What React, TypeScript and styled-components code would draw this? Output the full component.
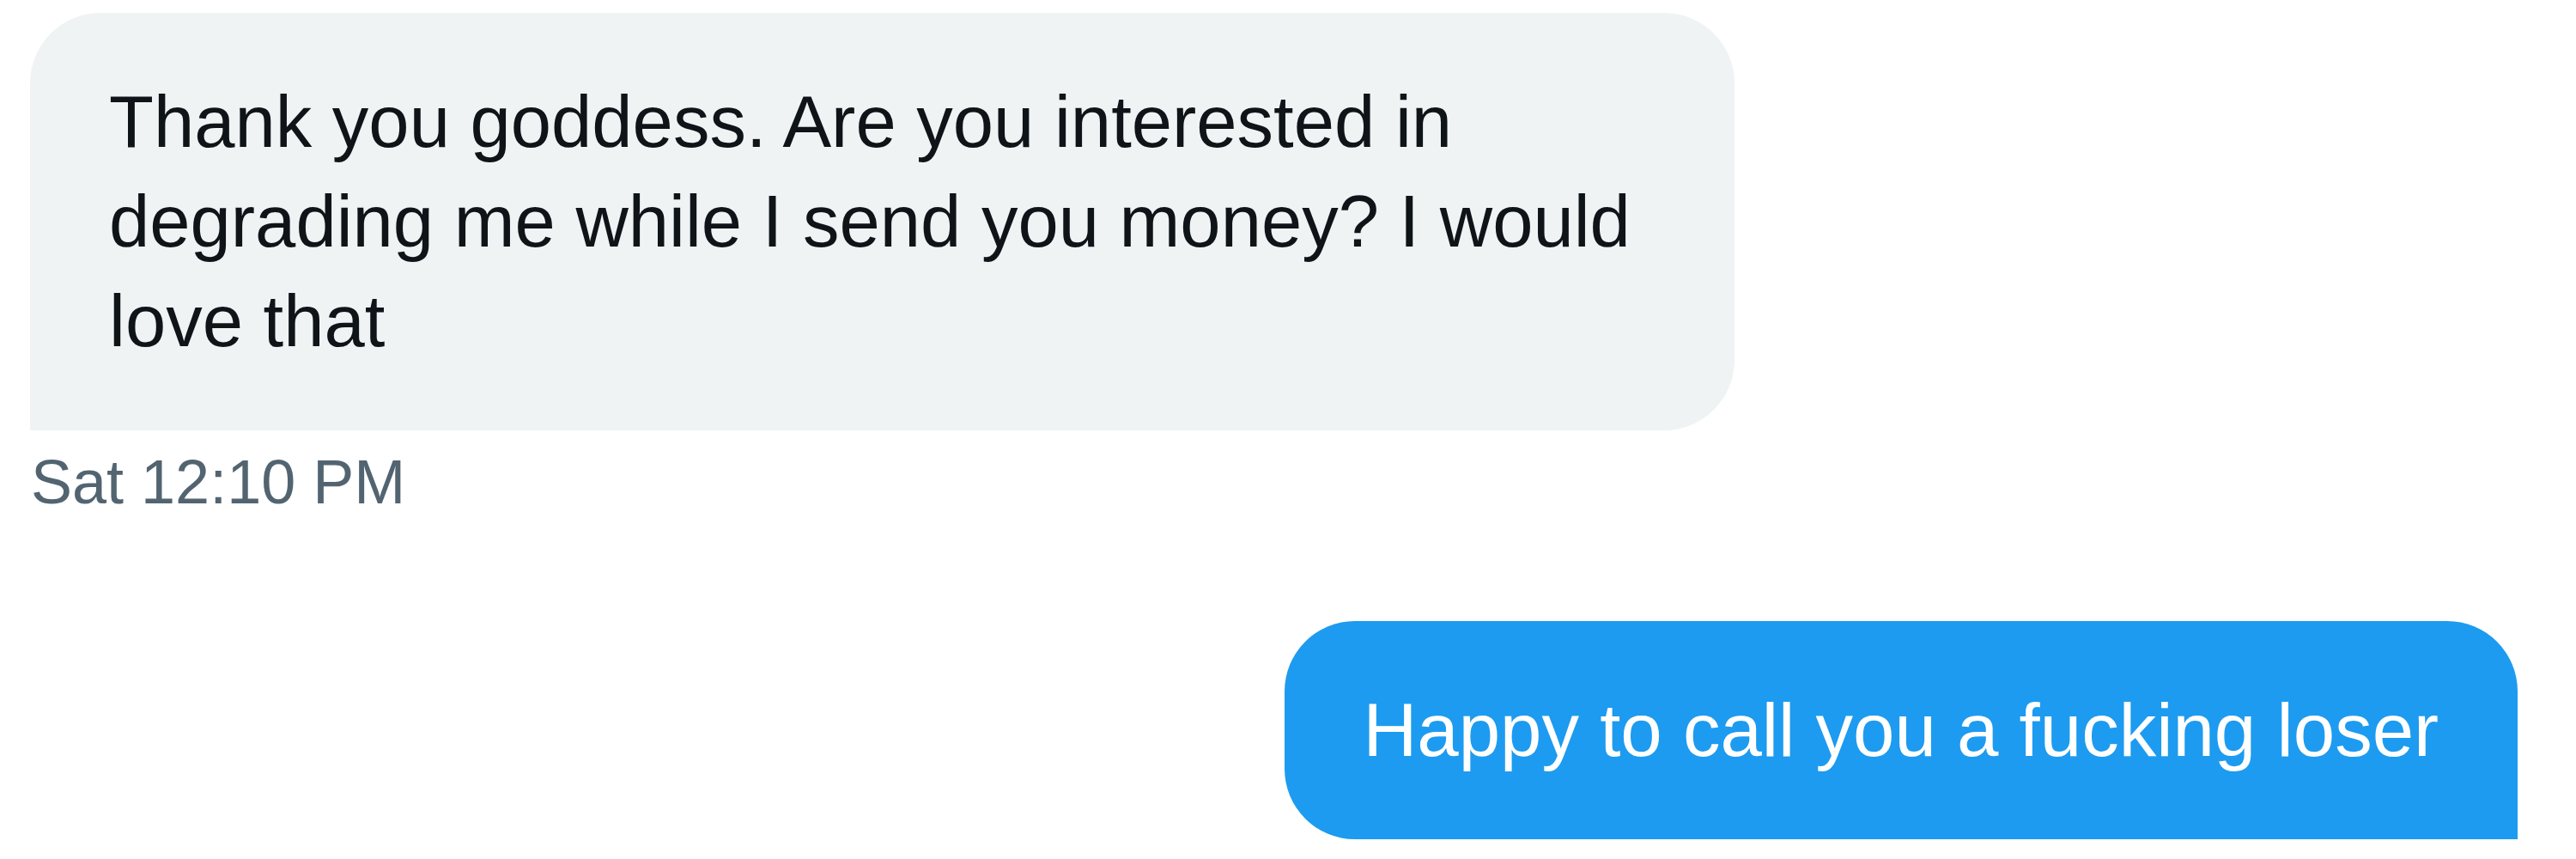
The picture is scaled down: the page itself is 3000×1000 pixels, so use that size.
import React from "react";
import styled, { createGlobalStyle } from "styled-components";

const GlobalStyle = createGlobalStyle`
  html, body {
    margin: 0;
    padding: 0;
    background: #ffffff;
  }
  body {
    font-family: "Liberation Sans", Arial, Helvetica, sans-serif;
  }
`;

const Conversation = styled.div`
  width: 3000px;
  height: 1000px;
  box-sizing: border-box;
  padding: 15px 68px 0 35px;
  display: flex;
  flex-direction: column;
  background: #ffffff;
  overflow: hidden;
`;

const MessageGroup = styled.div<{ $side: "left" | "right" }>`
  display: flex;
  flex-direction: column;
  align-items: ${(p) => (p.$side === "right" ? "flex-end" : "flex-start")};
  margin-top: ${(p) => (p.$side === "right" ? "116px" : "0")};
`;

const Bubble = styled.div<{ $variant: "received" | "sent" }>`
  box-sizing: border-box;
  line-height: 116px;
  padding: 69px 92px;
  ${(p) =>
    p.$variant === "received"
      ? `
    width: 1985px;
    font-size: 85px;
    background: #eff3f4;
    color: #0f1419;
    border-radius: 82px 82px 82px 0;
  `
      : `
    width: fit-content;
    font-size: 87px;
    padding-left: 92px;
    padding-right: 92px;
    background: #1d9bf0;
    color: #ffffff;
    border-radius: 82px 82px 0 82px;
  `}
`;

const Timestamp = styled.div`
  margin-top: 14px;
  padding-left: 1px;
  font-size: 72px;
  line-height: 92px;
  color: #536471;
`;

export default function App() {
  return (
    <>
      <GlobalStyle />
      <Conversation>
        <MessageGroup $side="left">
          <Bubble $variant="received">
            Thank you goddess. Are you interested in degrading me while I send
            you money? I would love that
          </Bubble>
          <Timestamp>Sat 12:10 PM</Timestamp>
        </MessageGroup>
        <MessageGroup $side="right">
          <Bubble $variant="sent">Happy to call you a fucking loser</Bubble>
        </MessageGroup>
      </Conversation>
    </>
  );
}
